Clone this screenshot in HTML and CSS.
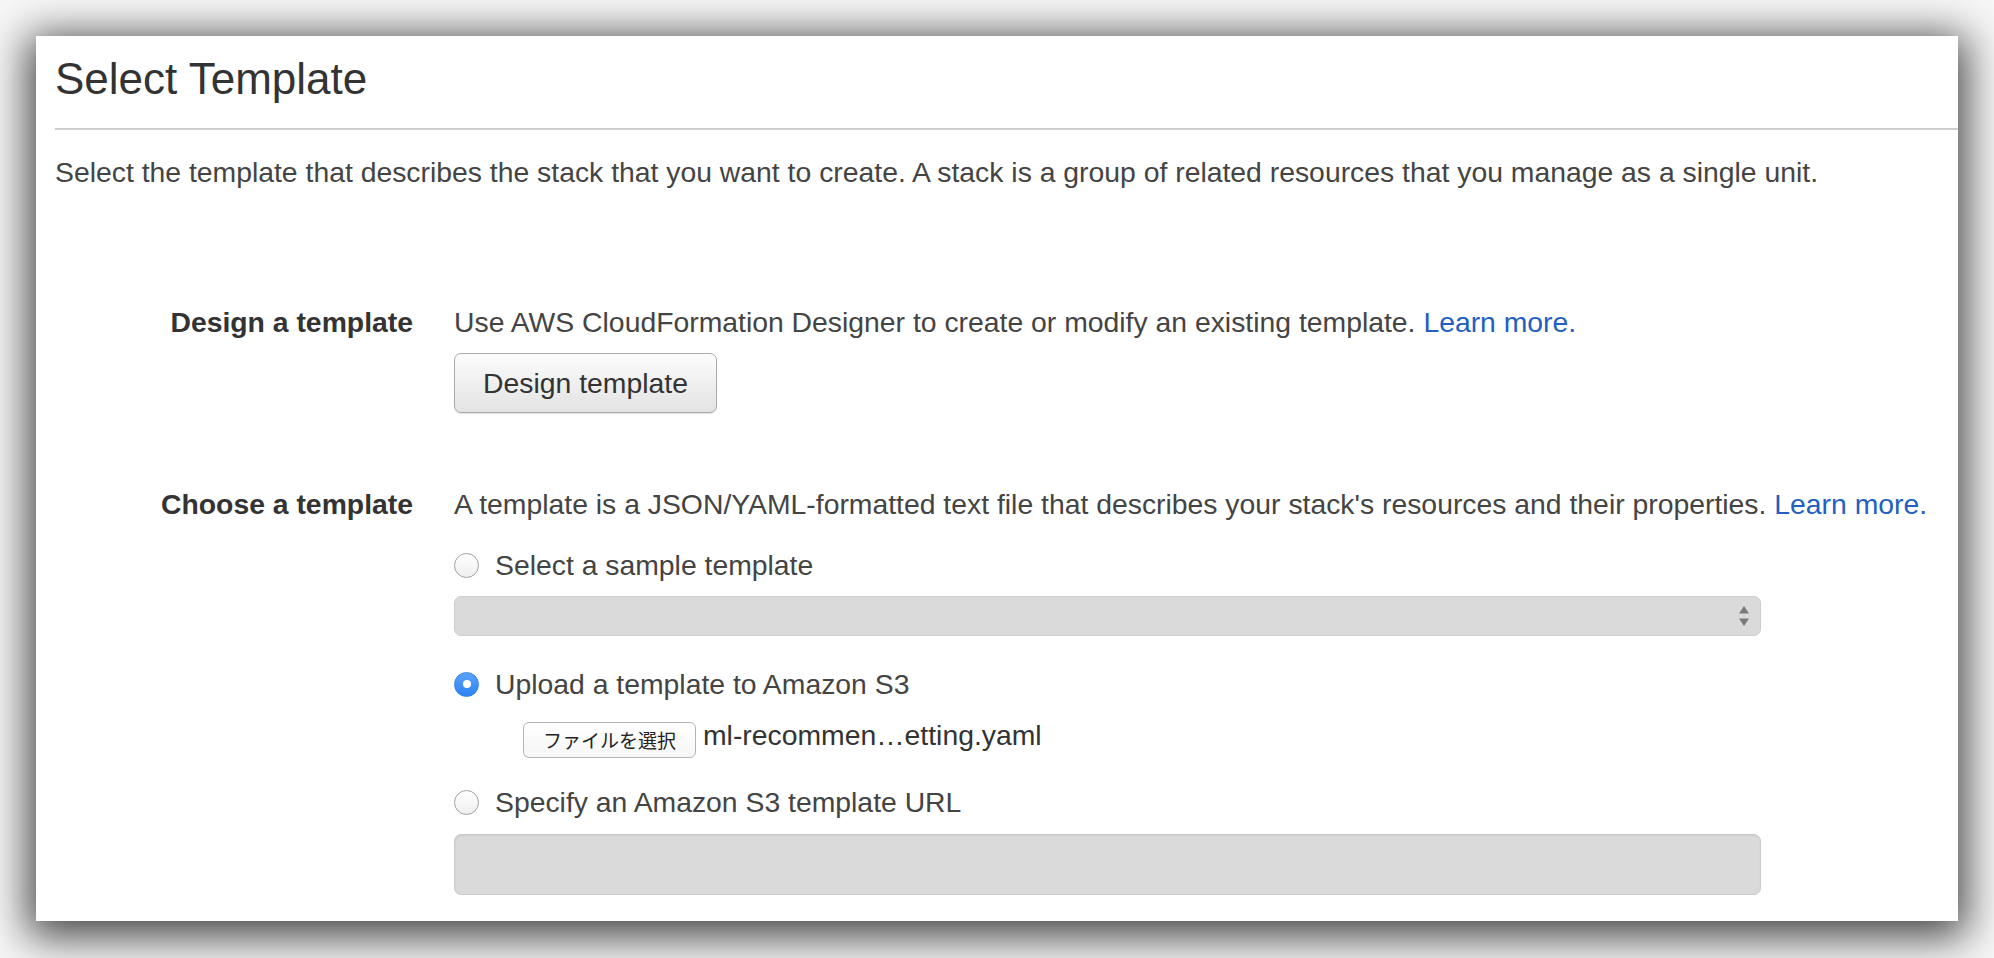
FILE: index.html
```html
<!DOCTYPE html>
<html lang="en">
<head>
<meta charset="utf-8">
<title>Select Template</title>
<link rel="stylesheet" href="styles.css">
</head>
<body>
<div class="page">
  <section class="card">
    <h2 class="title">Select Template</h2>
    <hr class="rule">
    <p class="intro">Select the template that describes the stack that you want to create. A stack is a group of related resources that you manage as a single unit.</p>

    <div class="form-row row-design">
      <div class="label">Design a template</div>
      <div class="field">
        <p class="text">Use AWS CloudFormation Designer to create or modify an existing template. <a class="link" href="#">Learn more.</a></p>
        <button class="btn" type="button">Design template</button>
      </div>
    </div>

    <div class="form-row row-choose">
      <div class="label">Choose a template</div>
      <div class="field">
        <p class="text">A template is a JSON/YAML-formatted text file that describes your stack's resources and their properties. <a class="link" href="#">Learn more.</a></p>
        <div class="option opt-sample"><span class="radio"></span><span class="opt-text">Select a sample template</span></div>
        <div class="select">
          <svg class="arrows" width="12" height="22" viewBox="0 0 12 22"><path d="M6 1 L11 8.5 L1 8.5 Z" fill="#7a7a7a"/><path d="M1 13.5 L11 13.5 L6 21 Z" fill="#7a7a7a"/></svg>
        </div>
        <div class="option opt-upload"><span class="radio checked"></span><span class="opt-text">Upload a template to Amazon S3</span></div>
        <div class="file-row"><span class="file-btn">ファイルを選択</span><span class="file-name">ml-recommen…etting.yaml</span></div>
        <div class="option opt-url"><span class="radio"></span><span class="opt-text">Specify an Amazon S3 template URL</span></div>
        <div class="input"></div>
      </div>
    </div>
  </section>
</div>
</body>
</html>
```

FILE: styles.css
```css
* { box-sizing: border-box; }

html, body {
  margin: 0;
  padding: 0;
  background: #f7f7f7;
}

body {
  font-family: "Liberation Sans", Arial, Helvetica, sans-serif;
  color: #444;
}

.page {
  width: 1994px;
  height: 958px;
  padding: 36px 36px 0 36px;
  overflow: hidden;
}

.card {
  width: 1922px;
  height: 885px;
  background: #fff;
  padding: 19px 0 26px 19px;
  box-shadow: 0 8px 40px 8px rgba(0, 0, 0, 0.72);
}

.title {
  margin: 0;
  font-size: 44px;
  line-height: 48px;
  font-weight: normal;
  color: #333;
}

.rule {
  margin: 25px 0 0 0;
  border: 0;
  height: 2px;
  background: #cfcfcf;
}

.intro {
  margin: 26px 0 0 0;
  font-size: 28.35px;
  line-height: 32px;
  white-space: nowrap;
}

.form-row {
  display: grid;
  grid-template-columns: 358px 1fr;
  column-gap: 41px;
}

.row-design { margin-top: 118px; }
.row-choose { margin-top: 75px; }

.label {
  text-align: right;
  font-size: 28.35px;
  line-height: 32px;
  font-weight: bold;
  color: #333;
  white-space: nowrap;
}

.field {
  display: flex;
  flex-direction: column;
  align-items: flex-start;
}

.text {
  margin: 0;
  font-size: 28.35px;
  line-height: 32px;
  white-space: nowrap;
}

.link {
  color: #225fc0;
  text-decoration: none;
}

.btn {
  margin-top: 15px;
  width: 263px;
  height: 60px;
  border: 1px solid #ababab;
  border-radius: 7px;
  background: linear-gradient(#fcfcfc, #e3e3e3);
  box-shadow: 0 1px 1px rgba(0, 0, 0, 0.12);
  font-family: "Liberation Sans", Arial, sans-serif;
  font-size: 28.35px;
  color: #333;
  padding: 0;
}

.option {
  display: flex;
  align-items: center;
  height: 32px;
  font-size: 28.35px;
  line-height: 32px;
  white-space: nowrap;
}

.opt-sample { margin-top: 29px; }
.opt-upload { margin-top: 32px; }
.opt-url { margin-top: 28px; }

.radio {
  width: 25px;
  height: 25px;
  border-radius: 50%;
  border: 1px solid #a2a2a2;
  background: linear-gradient(#ffffff, #efefef);
  margin-right: 16px;
  flex: none;
  position: relative;
}

.radio.checked {
  border-color: #2f83f1;
  background: linear-gradient(#5aa2fa, #2c83f2);
}

.radio.checked::after {
  content: "";
  position: absolute;
  left: 7.5px;
  top: 7.5px;
  width: 8px;
  height: 8px;
  border-radius: 50%;
  background: #fff;
}

.select {
  margin-top: 15px;
  width: 1307px;
  height: 40px;
  border-radius: 7px;
  background: #dadada;
  border: 1px solid #cdcdcd;
  display: flex;
  align-items: center;
  justify-content: flex-end;
  padding-right: 10px;
}

.file-row {
  margin-top: 22px;
  margin-left: 69px;
  display: flex;
  align-items: flex-start;
}

.file-btn {
  width: 173px;
  height: 36px;
  border: 1px solid #b5b5b5;
  border-radius: 6px;
  background: linear-gradient(#ffffff, #f6f6f6);
  font-family: "Noto Sans CJK JP", sans-serif;
  font-size: 19px;
  line-height: 34px;
  color: #222;
  text-align: center;
}

.file-name {
  margin-left: 7px;
  margin-top: -3px;
  font-size: 28.35px;
  line-height: 32px;
  color: #333;
  white-space: nowrap;
}

.input {
  margin-top: 16px;
  width: 1307px;
  height: 61px;
  border-radius: 7px;
  background: #dadada;
  border: 1px solid #cbcbcb;
  box-shadow: inset 0 1px 2px rgba(0, 0, 0, 0.06);
}
```
